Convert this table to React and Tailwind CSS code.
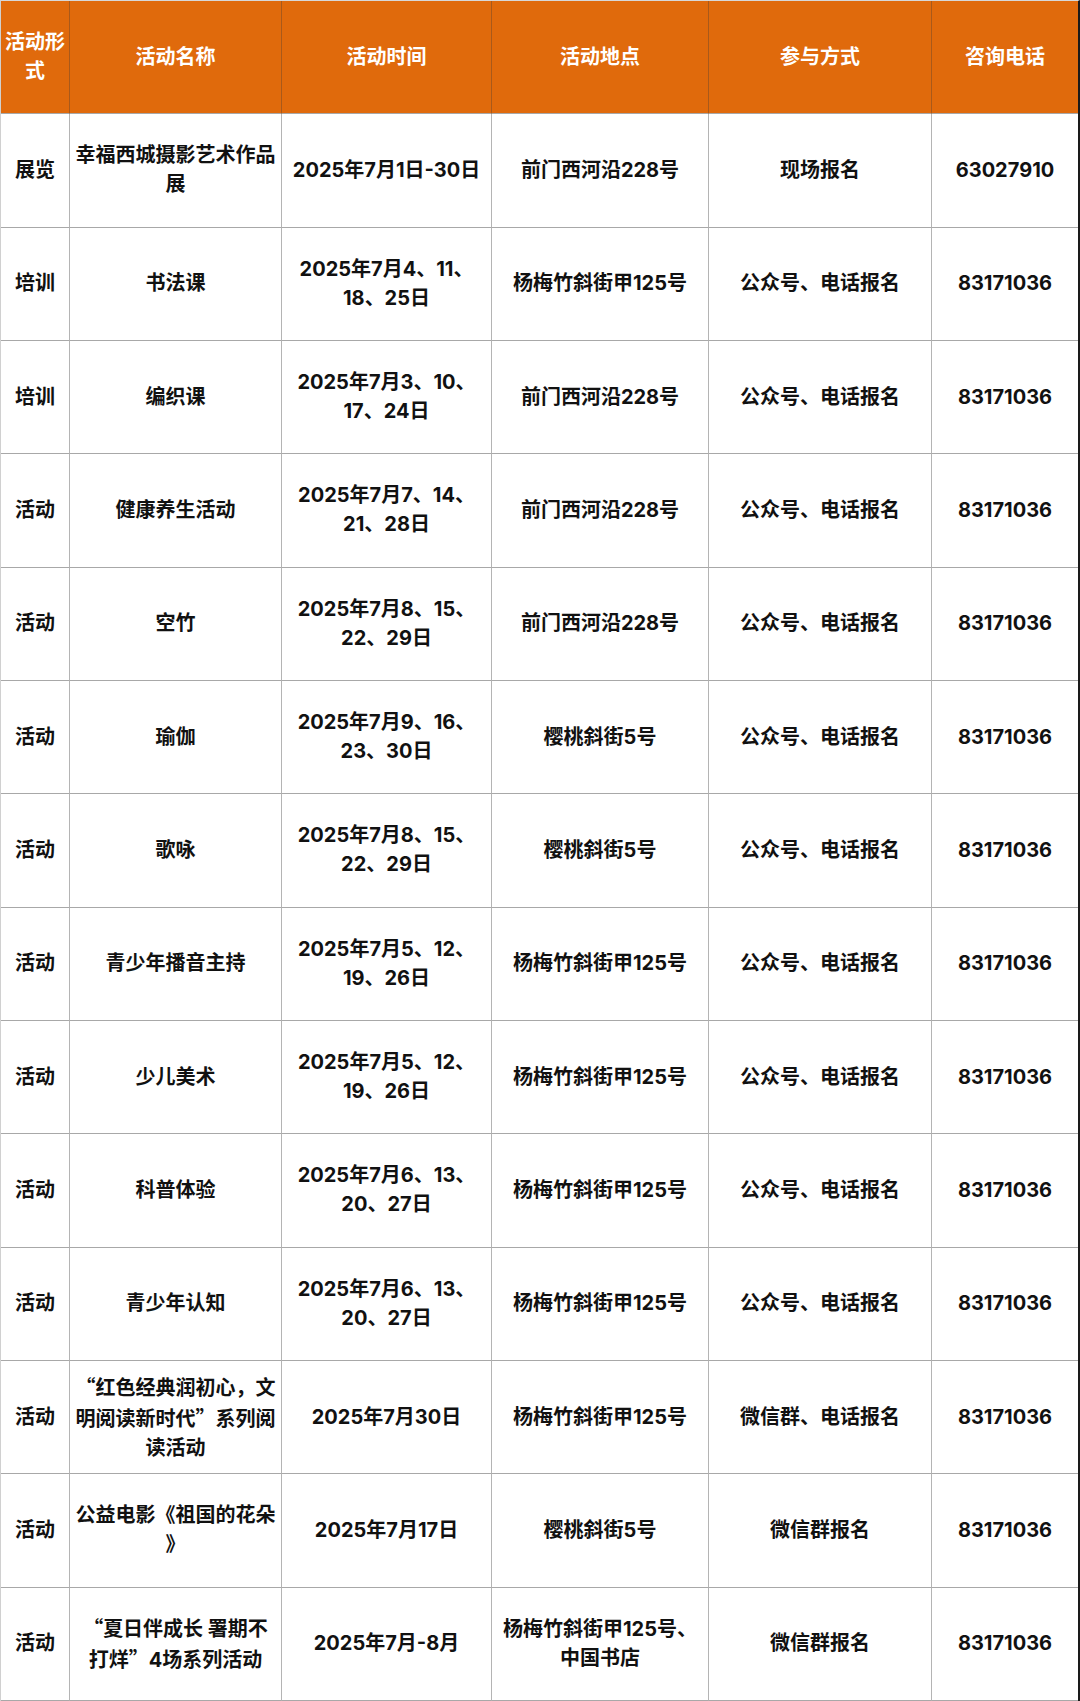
import React from "react";

const Q1 = () => <span className="font-['Noto_Sans_CJK_SC',sans-serif]">{"\u201C"}</span>;
const Q2 = () => <span className="font-['Noto_Sans_CJK_SC',sans-serif]">{"\u201D"}</span>;

const header = [["活动形", "式"], ["活动名称"], ["活动时间"], ["活动地点"], ["参与方式"], ["咨询电话"]];

const rows = [
  [["展览"], ["幸福西城摄影艺术作品", "展"], ["2025年7月1日-30日"], ["前门西河沿228号"], ["现场报名"], ["63027910"]],
  [["培训"], ["书法课"], ["2025年7月4、11、", "18、25日"], ["杨梅竹斜街甲125号"], ["公众号、电话报名"], ["83171036"]],
  [["培训"], ["编织课"], ["2025年7月3、10、", "17、24日"], ["前门西河沿228号"], ["公众号、电话报名"], ["83171036"]],
  [["活动"], ["健康养生活动"], ["2025年7月7、14、", "21、28日"], ["前门西河沿228号"], ["公众号、电话报名"], ["83171036"]],
  [["活动"], ["空竹"], ["2025年7月8、15、", "22、29日"], ["前门西河沿228号"], ["公众号、电话报名"], ["83171036"]],
  [["活动"], ["瑜伽"], ["2025年7月9、16、", "23、30日"], ["樱桃斜街5号"], ["公众号、电话报名"], ["83171036"]],
  [["活动"], ["歌咏"], ["2025年7月8、15、", "22、29日"], ["樱桃斜街5号"], ["公众号、电话报名"], ["83171036"]],
  [["活动"], ["青少年播音主持"], ["2025年7月5、12、", "19、26日"], ["杨梅竹斜街甲125号"], ["公众号、电话报名"], ["83171036"]],
  [["活动"], ["少儿美术"], ["2025年7月5、12、", "19、26日"], ["杨梅竹斜街甲125号"], ["公众号、电话报名"], ["83171036"]],
  [["活动"], ["科普体验"], ["2025年7月6、13、", "20、27日"], ["杨梅竹斜街甲125号"], ["公众号、电话报名"], ["83171036"]],
  [["活动"], ["青少年认知"], ["2025年7月6、13、", "20、27日"], ["杨梅竹斜街甲125号"], ["公众号、电话报名"], ["83171036"]],
  [
    ["活动"],
    [<><Q1 />红色经典润初心，文</>, <>明阅读新时代<Q2 />系列阅</>, "读活动"],
    ["2025年7月30日"],
    ["杨梅竹斜街甲125号"],
    ["微信群、电话报名"],
    ["83171036"],
  ],
  [["活动"], ["公益电影《祖国的花朵", "》"], ["2025年7月17日"], ["樱桃斜街5号"], ["微信群报名"], ["83171036"]],
  [
    ["活动"],
    [<><Q1 />夏日伴成长 署期不</>, <>打烊<Q2 />4场系列活动</>],
    ["2025年7月-8月"],
    ["杨梅竹斜街甲125号、", "中国书店"],
    ["微信群报名"],
    ["83171036"],
  ],
];

function Lines({ lines }) {
  return (
    <div className="whitespace-nowrap">
      {lines.map((l, i) => (
        <div key={i}>{l}</div>
      ))}
    </div>
  );
}

export default function App() {
  return (
    <div className="w-[1080px] h-[1701px] bg-white text-[20px] leading-[29px] font-bold text-[#111] font-['Inter','Noto_Sans_CJK_SC',sans-serif]">
      <div className="h-full grid grid-cols-[69px_212px_210px_217px_223px_1fr] grid-rows-[repeat(15,minmax(0,1fr))] border-l border-t border-l-[#d0d0d0] border-t-[#d8d8d8] border-r-2 border-r-[#1a1a1a]">
        {header.map((h, i) => (
          <div
            key={"h" + i}
            className={
              i < 5
                ? "flex items-center justify-center text-center bg-[#e06a0c] text-white border-b border-b-[#a8a8a8] border-r border-r-[#a9591a]"
                : "flex items-center justify-center text-center bg-[#e06a0c] text-white border-b border-b-[#a8a8a8]"
            }
          >
            <Lines lines={h} />
          </div>
        ))}
        {rows.map((r, ri) =>
          r.map((c, ci) => (
            <div
              key={ri + "-" + ci}
              className={
                ci < 5
                  ? "flex items-center justify-center text-center border-b border-b-[#a8a8a8] border-r border-r-[#b4b4b4]"
                  : "flex items-center justify-center text-center border-b border-b-[#a8a8a8]"
              }
            >
              <Lines lines={c} />
            </div>
          ))
        )}
      </div>
    </div>
  );
}
